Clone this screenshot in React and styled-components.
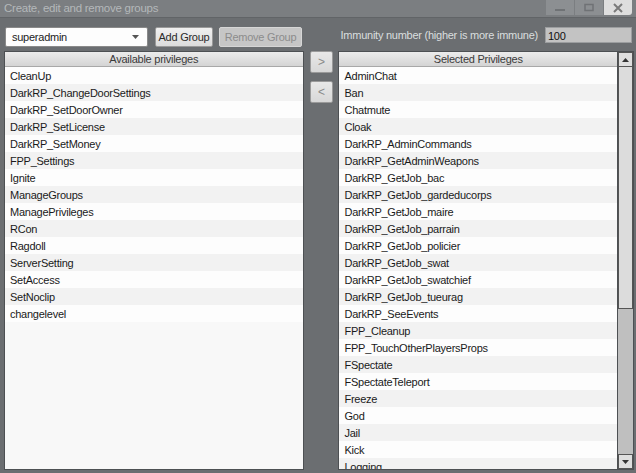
import styled, { createGlobalStyle } from 'styled-components'

const GlobalStyle = createGlobalStyle`
    html, body {
        margin: 0;
        padding: 0;
        background: #6b6e71;
    }
    body {
        font-family: "Liberation Sans", Arial, sans-serif;
        font-size: 11px;
        letter-spacing: -0.25px;
        white-space: nowrap;
    }
`

const available = [
    'CleanUp', 'DarkRP_ChangeDoorSettings', 'DarkRP_SetDoorOwner', 'DarkRP_SetLicense',
    'DarkRP_SetMoney', 'FPP_Settings', 'Ignite', 'ManageGroups', 'ManagePrivileges',
    'RCon', 'Ragdoll', 'ServerSetting', 'SetAccess', 'SetNoclip', 'changelevel',
]

const selected = [
    'AdminChat', 'Ban', 'Chatmute', 'Cloak', 'DarkRP_AdminCommands', 'DarkRP_GetAdminWeapons',
    'DarkRP_GetJob_bac', 'DarkRP_GetJob_gardeducorps', 'DarkRP_GetJob_maire', 'DarkRP_GetJob_parrain',
    'DarkRP_GetJob_policier', 'DarkRP_GetJob_swat', 'DarkRP_GetJob_swatchief', 'DarkRP_GetJob_tueurag',
    'DarkRP_SeeEvents', 'FPP_Cleanup', 'FPP_TouchOtherPlayersProps', 'FSpectate', 'FSpectateTeleport',
    'Freeze', 'God', 'Jail', 'Kick', 'Logging',
]

function App() {
    return (
        <Window>
            <GlobalStyle />
            <TitleBar>
                <Title>Create, edit and remove groups</Title>
                <Controls>
                    <CtrlBut>
                        <svg width="12" height="10" viewBox="0 0 12 10"><rect x="1" y="6" width="10" height="2" fill="#6f7275" /></svg>
                    </CtrlBut>
                    <CtrlBut>
                        <svg width="12" height="10" viewBox="0 0 12 10"><rect x="2" y="1.5" width="8" height="6" fill="none" stroke="#6f7275" strokeWidth="1.5" /></svg>
                    </CtrlBut>
                    <CtrlBut $close>
                        <svg width="12" height="10" viewBox="0 0 12 10"><path d="M2 1 L10 9 M10 1 L2 9" stroke="#7a7a7a" strokeWidth="2" /></svg>
                    </CtrlBut>
                </Controls>
            </TitleBar>

            <Toolbar>
                <Dropdown>
                    <span>superadmin</span>
                    <svg width="7" height="4" viewBox="0 0 7 4"><path d="M0 0 H7 L3.5 4 Z" fill="#555" /></svg>
                </Dropdown>
                <ToolBut>Add Group</ToolBut>
                <ToolBut $disabled>Remove Group</ToolBut>
                <Immunity>
                    <Label>Immunity number (higher is more immune)</Label>
                    <NumInput>100</NumInput>
                </Immunity>
            </Toolbar>

            <Body>
                <Panel $w={300}>
                    <Header>Available privileges</Header>
                    <List>
                        {available.map((p, i) => (
                            <Row key={p} $odd={i % 2 === 1}>{p}</Row>
                        ))}
                    </List>
                </Panel>

                <Mover>
                    <MoveBut>&gt;</MoveBut>
                    <MoveBut>&lt;</MoveBut>
                </Mover>

                <Panel $w={280}>
                    <Header>Selected Privileges</Header>
                    <List>
                        {selected.map((p, i) => (
                            <Row key={p} $odd={i % 2 === 1}>{p}</Row>
                        ))}
                    </List>
                </Panel>

                <Scrollbar>
                    <ScrollBut>
                        <svg width="7" height="4" viewBox="0 0 7 4"><path d="M0 4 H7 L3.5 0 Z" fill="#333" /></svg>
                    </ScrollBut>
                    <Thumb />
                    <Track />
                    <ScrollBut>
                        <svg width="7" height="4" viewBox="0 0 7 4"><path d="M0 0 H7 L3.5 4 Z" fill="#333" /></svg>
                    </ScrollBut>
                </Scrollbar>
            </Body>
        </Window>
    )
}

const Window = styled.div`
    width: 636px;
    height: 473px;
    display: flex;
    flex-direction: column;
    background: #6b6e71;
    overflow: hidden;
`

const TitleBar = styled.div`
    height: 17px;
    display: flex;
    align-items: flex-start;
    justify-content: space-between;
    background: #7b7e81;
    border-bottom: 1px solid #616467;
`

const Title = styled.div`
    padding: 2px 0 0 4px;
    color: #b4b8ba;
    font-size: 11.5px;
`

const Controls = styled.div`
    display: flex;
    gap: 1px;
    margin-right: 4px;
`

const CtrlBut = styled.div`
    width: 28px;
    height: 15px;
    display: flex;
    align-items: center;
    justify-content: center;
    background: ${props => props.$close ? '#dedede' : '#8c8f92'};
    border-radius: 0 0 ${props => props.$close ? '3px 0' : '0 0'};
`

const Toolbar = styled.div`
    display: flex;
    align-items: flex-start;
    padding: 9px 4px 0 5px;
    height: 24px;
`

const Dropdown = styled.div`
    display: flex;
    align-items: center;
    justify-content: space-between;
    padding: 0 8px 0 6px;
    box-sizing: border-box;
    width: 143px;
    height: 20px;
    background: #fdfdfd;
    border: 1px solid #8a8a8a;
    border-radius: 2px;
    color: #222;
`

const ToolBut = styled.div`
    height: 20px;
    box-sizing: border-box;
    display: flex;
    align-items: center;
    justify-content: center;
    margin-left: ${props => props.$disabled ? '6px' : '7px'};
    width: ${props => props.$disabled ? '83px' : '58px'};
    border: 1px solid ${props => props.$disabled ? '#d6d6d6' : '#9a9a9a'};
    border-radius: 2px;
    background: ${props => props.$disabled ? '#c6c6c6' : 'linear-gradient(#f0f0f0, #dcdcdc)'};
    color: ${props => props.$disabled ? '#8c8c8c' : '#2a2a2a'};
`

const Immunity = styled.div`
    display: flex;
    align-items: center;
    margin-left: auto;
    gap: 7px;
`

const Label = styled.div`
    color: #dadedf;
`

const NumInput = styled.div`
    width: 87px;
    height: 16px;
    box-sizing: border-box;
    padding: 2px 0 0 2px;
    background: #c3c3c3;
    border: 1px solid #9c9ea0;
    color: #111;
`

const Body = styled.div`
    flex: 1;
    display: flex;
    align-items: stretch;
    padding: 0 2px 3px 4px;
    min-height: 0;
`

const Panel = styled.div`
    width: ${props => props.$w}px;
    display: flex;
    flex-direction: column;
    border: 1px solid #4d5053;
    box-sizing: border-box;
    background: #f8f8f8;
    overflow: hidden;
`

const Header = styled.div`
    height: 14px;
    flex: none;
    display: flex;
    align-items: center;
    justify-content: center;
    background: linear-gradient(#ececec, #d4d4d4);
    border-bottom: 1px solid #a8a8a8;
    color: #3a3a3a;
`

const List = styled.div`
    flex: 1;
    display: flex;
    flex-direction: column;
    overflow: hidden;
`

const Row = styled.div`
    height: 17px;
    flex: none;
    display: flex;
    align-items: center;
    padding-left: 5px;
    background: ${props => props.$odd ? '#f2f2f2' : '#fdfdfd'};
    color: #1a1a1a;
`

const Mover = styled.div`
    width: 24px;
    margin: 0 5px 0 6px;
    display: flex;
    flex-direction: column;
    gap: 8px;
`

const MoveBut = styled.div`
    height: 22px;
    display: flex;
    align-items: center;
    justify-content: center;
    background: linear-gradient(#e8e8e8, #d8d8d8);
    border: 1px solid #9a9a9a;
    border-radius: 2px;
    box-sizing: border-box;
    color: #8a8a8a;
    font-size: 12px;
`

const Scrollbar = styled.div`
    width: 16px;
    display: flex;
    flex-direction: column;
    border: 1px solid #4d5053;
    border-left: none;
    box-sizing: border-box;
    background: #bfbfbf;
`

const ScrollBut = styled.div`
    height: 15px;
    flex: none;
    display: flex;
    align-items: center;
    justify-content: center;
    background: #dedede;
    border: 1px solid #555;
    box-sizing: border-box;
`

const Thumb = styled.div`
    height: 242px;
    flex: none;
    background: #dcdcdc;
    border: 1px solid #555;
    border-top: none;
    box-sizing: border-box;
`

const Track = styled.div`
    flex: 1;
`

export default App
